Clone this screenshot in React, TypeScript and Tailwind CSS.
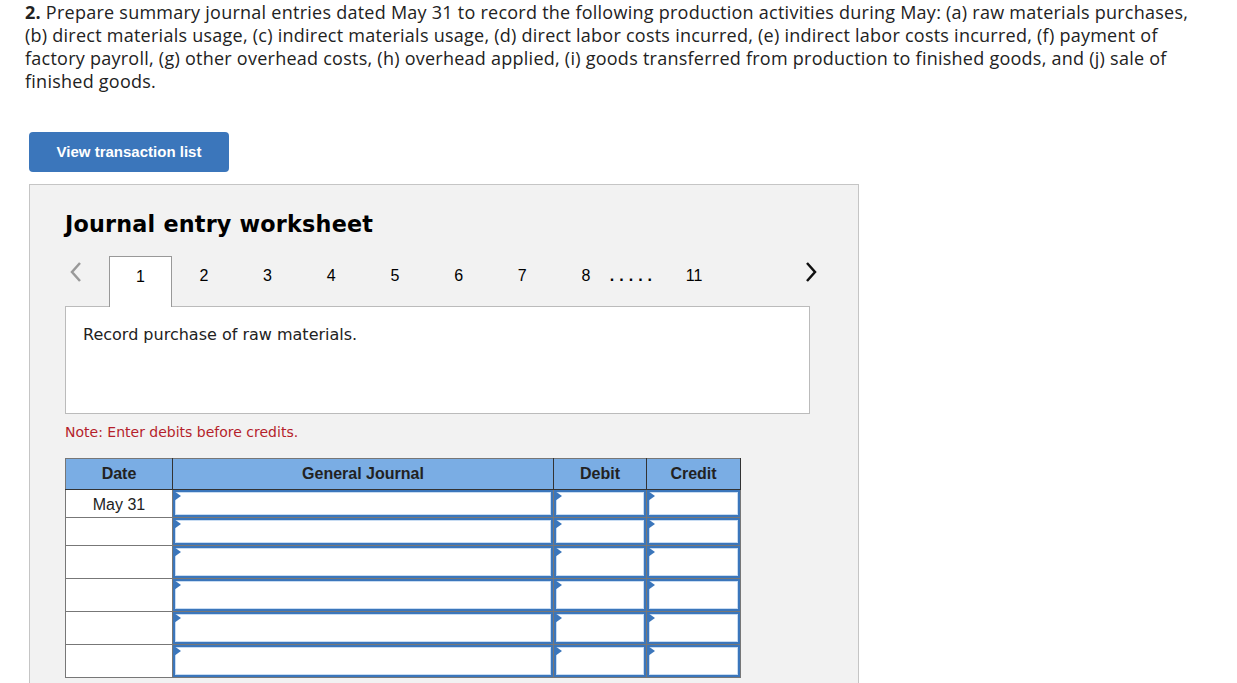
import React from "react";

const rowHeights = [28, 28, 33, 33, 33, 33];

function Cell({ h }: { h: number }) {
  return (
    <td className="border border-[#777] p-0 bg-white align-top">
      <div className="relative w-full border-2 border-[#3b76bb] bg-white" style={{ height: h - 1 }}>
        <div className="absolute inset-0 border border-[#c8dcf2]" />
        <svg className="absolute left-[-1px] top-[-1px]" width="7" height="11" viewBox="0 0 7 11">
          <polygon points="0,0 7,5 0,10" fill="#3b76bb" />
        </svg>
      </div>
    </td>
  );
}

export default function App() {
  const tabs = ["1", "2", "3", "4", "5", "6", "7", "8"];
  return (
    <div className="w-[1237px] h-[683px] overflow-hidden bg-white text-black">
      <p className="px-[25px] pt-[1px] text-[18px] leading-[23px] tracking-[0.25px] text-[#222] font-['Open_Sans',sans-serif] whitespace-nowrap">
        <b>2.</b> Prepare summary journal entries dated May 31 to record the following production activities during May: (a) raw materials purchases,
        <br />
        (b) direct materials usage, (c) indirect materials usage, (d) direct labor costs incurred, (e) indirect labor costs incurred, (f) payment of
        <br />
        factory payroll, (g) other overhead costs, (h) overhead applied, (i) goods transferred from production to finished goods, and (j) sale of
        <br />
        finished goods.
      </p>
      <div className="ml-[29px] mt-[39px]">
        <button className="w-[200px] h-[40px] rounded-[4px] bg-[#3b76bb] text-white text-[15px] font-bold font-['Liberation_Sans',Arial,sans-serif]">
          View transaction list
        </button>
        <div className="mt-[12px] w-[830px] h-[520px] border border-[#c5c5c5] bg-[#f2f2f2] pl-[35px] pt-[24px]">
          <h2 className="text-[22.3px] font-bold leading-[30px] font-['DejaVu_Sans',Verdana,sans-serif] tracking-[0.2px]">
            Journal entry worksheet
          </h2>
          <div className="mt-[17px] flex items-start h-[50px] w-[745px] font-['Liberation_Sans',Arial,sans-serif] text-[16px] leading-[20px]">
            <div className="w-[44px] h-full pt-[5px] pl-[4px]">
              <svg width="14" height="22" viewBox="0 0 14 22">
                <polyline points="11,2 3,11 11,20" fill="none" stroke="#999" strokeWidth="2.5" />
              </svg>
            </div>
            {tabs.map((t, i) => (
              <div
                key={t}
                className={
                  i === 0
                    ? "w-[63px] h-[51px] pt-[10px] bg-white border border-b-0 border-[#999] text-center relative z-10"
                    : "w-[63.7px] h-full pt-[10px] text-center"
                }
              >
                {t}
              </div>
            ))}
            <div className="h-full pt-[10px] ml-[-8px] w-[56px] tracking-[5px] font-bold text-[16px]">.....</div>
            <div className="h-full pt-[10px] w-[40px] ml-[20px]">11</div>
            <div className="flex-1" />
            <div className="h-full pt-[5px] mr-[-8px]">
              <svg width="14" height="22" viewBox="0 0 14 22">
                <polyline points="3,2 11,11 3,20" fill="none" stroke="#111" strokeWidth="2.5" />
              </svg>
            </div>
          </div>
          <div className="w-[745px] h-[108px] bg-white border border-[#bbb] px-[17px] pt-[16px] text-[16px] font-['DejaVu_Sans',Verdana,sans-serif] text-[#222]">
            Record purchase of raw materials.
          </div>
          <div className="mt-[10px] text-[14px] leading-[16px] text-[#b51f2b] font-['DejaVu_Sans',Verdana,sans-serif]">
            Note: Enter debits before credits.
          </div>
          <table className="mt-[18px] border-collapse table-fixed w-[676px] font-['Liberation_Sans',Arial,sans-serif] text-[16px]">
            <thead>
              <tr className="h-[31px] bg-[#7aade4] text-[#222] font-bold">
                <th className="w-[107px] border border-[#333] border-l-[#777] border-t-[#777] font-bold">Date</th>
                <th className="w-[381px] border border-[#333] border-t-[#777] font-bold">General Journal</th>
                <th className="w-[93px] border border-[#333] border-t-[#777] font-bold">Debit</th>
                <th className="w-[94px] border border-[#333] border-t-[#777] font-bold">Credit</th>
              </tr>
            </thead>
            <tbody>
              {rowHeights.map((h, i) => (
                <tr key={i} style={{ height: h }}>
                  <td className="border border-[#777] bg-white text-center text-[#222] p-0 align-top pt-[3px]">
                    {i === 0 ? "May 31" : ""}
                  </td>
                  <Cell h={h} />
                  <Cell h={h} />
                  <Cell h={h} />
                </tr>
              ))}
            </tbody>
          </table>
        </div>
      </div>
    </div>
  );
}
